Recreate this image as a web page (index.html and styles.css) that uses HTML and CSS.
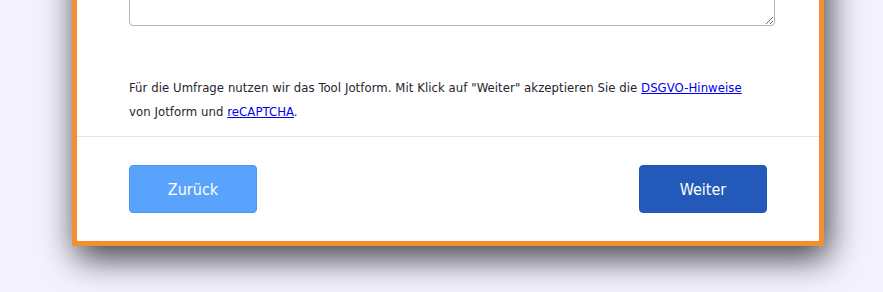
FILE: index.html
```html
<html>
  <head>
    <title>Umfrage</title>
    <link rel="stylesheet" href="styles.css">
  </head>
  <body>
    <div class="page">
      <div class="card">
        <div class="field">
          <textarea class="answer"></textarea>
        </div>
        <p class="notice">
          Für die Umfrage nutzen wir das Tool Jotform. Mit Klick auf "Weiter" akzeptieren Sie die <a href="#">DSGVO-Hinweise</a><br>
          von Jotform und <a href="#">reCAPTCHA</a>.
        </p>
        <div class="nav">
          <button class="btn btn-back" type="button">Zurück</button>
          <button class="btn btn-next" type="button">Weiter</button>
        </div>
      </div>
    </div>
  </body>
</html>
```

FILE: styles.css
```css
html,
body {
  margin: 0;
  height: 100%;
  overflow: hidden;
  background-color: #F3F2FD;
}
.page {
  padding-left: 72px;
  margin-top: -70px;
}
.card {
  width: 752px;
  box-sizing: border-box;
  border: 5px solid #F28F2F;
  border-top-width: 0;
  background-color: #FFF;
  box-shadow: 4px 12px 32px rgba(10, 10, 20, 0.78);
}
.field {
  padding: 0 44px 0 52px;
}
.answer {
  display: block;
  width: 100%;
  height: 96px;
  box-sizing: border-box;
  border: 1px solid #B3B1C3;
  border-radius: 4px;
  background-color: #FFF;
}
.notice {
  margin: 0;
  padding: 50px 52px 12px;
  border-bottom: 1px solid #E4E3EE;
  font-family: "DejaVu Sans Condensed", "DejaVu Sans", sans-serif;
  font-size: 13px;
  letter-spacing: 0.06px;
  line-height: 24px;
  color: #1F2430;
}
.notice a {
  color: #0000EE;
}
.nav {
  display: flex;
  justify-content: space-between;
  padding: 28px 52px;
}
.btn {
  width: 128px;
  height: 48px;
  border-radius: 4px;
  font-family: "DejaVu Sans Condensed", "DejaVu Sans", sans-serif;
  font-size: 16px;
  color: #FFF;
  cursor: pointer;
}
.btn-back {
  border: 1px solid #4A94F5;
  background-color: #5AA3FD;
}
.btn-next {
  border: 1px solid #2257B5;
  background-color: #2359B8;
}
```
